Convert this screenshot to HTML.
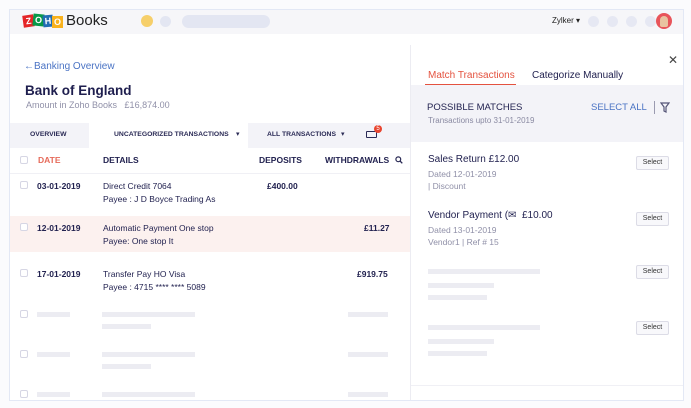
<!DOCTYPE html>
<html><head><meta charset="utf-8"><style>
*{margin:0;padding:0;box-sizing:border-box}
body{width:691px;height:408px;background:#fbfbfd;font-family:"Liberation Sans",sans-serif;position:relative;overflow:hidden;color:#222250}
.a{position:absolute;white-space:nowrap}
.sk{position:absolute;background:#ececf2;height:5px}
.cb{position:absolute;width:8px;height:8px;border:1px solid #d6d6e4;border-radius:2px;background:#fff}
.btn{position:absolute;width:33px;height:14px;border:1px solid #dcdce6;border-radius:2px;background:#f8f8fb;font-size:7px;text-align:center;line-height:12px;color:#333}
.dot{position:absolute;width:11px;height:11px;border-radius:50%;background:#e6e8f3}
</style></head><body>
<div class="a" style="left:9px;top:9px;width:675px;height:392px;background:#fff;border:1px solid #e3e8f5"></div>
<div class="a" style="left:10px;top:10px;width:673px;height:24px;background:#f6f6f9"></div>
<div class="a" style="left:23px;top:15px;width:11px;height:12px;background:#e42527;transform:rotate(-8deg);color:#fff;font-size:9px;font-weight:bold;text-align:center;line-height:12px">Z</div>
<div class="a" style="left:33px;top:14px;width:11px;height:12px;background:#089949;transform:rotate(6deg);color:#fff;font-size:9px;font-weight:bold;text-align:center;line-height:12px">O</div>
<div class="a" style="left:43px;top:15px;width:10px;height:12px;background:#226db4;transform:rotate(-5deg);color:#fff;font-size:9px;font-weight:bold;text-align:center;line-height:12px">H</div>
<div class="a" style="left:52px;top:16px;width:11px;height:12px;background:#f9b21d;color:#fff;font-size:9px;font-weight:bold;text-align:center;line-height:12px">O</div>
<div class="a" style="left:66px;top:12px;font-size:15px;color:#222;line-height:18px">Books</div>
<div class="a" style="left:141px;top:15px;width:12px;height:12px;border-radius:50%;background:#f6cf6a"></div>
<div class="a" style="left:160px;top:16px;width:11px;height:11px;border-radius:50%;background:#e3e6f2"></div>
<div class="a" style="left:182px;top:15px;width:88px;height:13px;border-radius:7px;background:#e3e6f2"></div>
<div class="a" style="left:552px;top:16px;font-size:8px;color:#222">Zylker ▾</div>
<div class="dot" style="left:588px;top:16px"></div><div class="dot" style="left:607px;top:16px"></div><div class="dot" style="left:626px;top:16px"></div><div class="dot" style="left:645px;top:16px"></div>
<div class="a" style="left:656px;top:13px;width:16px;height:16px;border-radius:50%;background:#e8545a"><div style="margin:3px 4px;width:8px;height:11px;border-radius:4px 4px 2px 2px;background:#e9c3a0"></div></div>
<div class="a" style="left:24px;top:61px;font-size:10px;color:#4a73c4">←Banking Overview</div>
<div class="a" style="left:25px;top:83px;font-size:13.5px;font-weight:bold;color:#1e1e4e">Bank of England</div>
<div class="a" style="left:26px;top:100px;font-size:9px;color:#9090a8">Amount in Zoho Books &nbsp; £16,874.00</div>
<div class="a" style="left:10px;top:123px;width:400px;height:25px;background:#f3f3f8"></div>
<div class="a" style="left:89px;top:123px;width:159px;height:25px;background:#fff"></div>
<div class="a" style="left:30px;top:131px;font-size:6.8px;font-weight:bold;color:#2a2a55">OVERVIEW</div>
<div class="a" style="left:114px;top:131px;font-size:6.8px;font-weight:bold;color:#2a2a55">UNCATEGORIZED TRANSACTIONS</div>
<div class="a" style="left:236px;top:130px;font-size:7px;color:#2a2a55">▾</div>
<div class="a" style="left:267px;top:131px;font-size:6.8px;font-weight:bold;color:#2a2a55">ALL TRANSACTIONS</div>
<div class="a" style="left:341px;top:130px;font-size:7px;color:#2a2a55">▾</div>
<div class="a" style="left:366px;top:131px;width:11px;height:7px;border:1.3px solid #2a2a55;border-radius:1px"></div>
<div class="a" style="left:374px;top:125px;width:8px;height:8px;border-radius:50%;background:#e8452f;color:#fff;font-size:6px;text-align:center;line-height:8px">5</div>
<div class="a" style="left:10px;top:173px;width:400px;height:1px;background:#f0f0f5"></div>
<div class="cb" style="left:20px;top:156px"></div>
<div class="a" style="left:38px;top:155px;font-size:8.5px;font-weight:bold;color:#e66a5a">DATE</div>
<div class="a" style="left:103px;top:155px;font-size:8.5px;font-weight:bold">DETAILS</div>
<div class="a" style="left:259px;top:155px;font-size:8.5px;font-weight:bold">DEPOSITS</div>
<div class="a" style="left:325px;top:155px;font-size:8.5px;font-weight:bold">WITHDRAWALS</div>
<svg class="a" style="left:395px;top:156px" width="8" height="8" viewBox="0 0 8 8"><circle cx="3.3" cy="3.3" r="2.4" fill="none" stroke="#2a2a55" stroke-width="1.2"/><path d="M5 5l2.3 2.3" stroke="#2a2a55" stroke-width="1.3"/></svg>
<div class="cb" style="left:20px;top:181px"></div>
<div class="a" style="left:37px;top:181px;font-size:8.5px;font-weight:bold">03-01-2019</div>
<div class="a" style="left:103px;top:181px;font-size:8.5px">Direct Credit 7064</div>
<div class="a" style="left:103px;top:194px;font-size:8.5px">Payee : J D Boyce Trading As</div>
<div class="a" style="left:267px;top:181px;font-size:8.5px;font-weight:bold">£400.00</div>
<div class="a" style="left:10px;top:216px;width:400px;height:36px;background:#fcf1ef"></div>
<div class="cb" style="left:20px;top:223px"></div>
<div class="a" style="left:37px;top:223px;font-size:8.5px;font-weight:bold">12-01-2019</div>
<div class="a" style="left:103px;top:223px;font-size:8.5px">Automatic Payment One stop</div>
<div class="a" style="left:103px;top:236px;font-size:8.5px">Payee: One stop It</div>
<div class="a" style="left:364px;top:223px;font-size:8.5px;font-weight:bold">£11.27</div>
<div class="cb" style="left:20px;top:269px"></div>
<div class="a" style="left:37px;top:269px;font-size:8.5px;font-weight:bold">17-01-2019</div>
<div class="a" style="left:103px;top:269px;font-size:8.5px">Transfer Pay HO Visa</div>
<div class="a" style="left:103px;top:282px;font-size:8.5px">Payee : 4715 **** **** 5089</div>
<div class="a" style="left:357px;top:269px;font-size:8.5px;font-weight:bold">£919.75</div>
<div class="cb" style="left:20px;top:310px"></div><div class="sk" style="left:37px;top:312px;width:33px"></div><div class="sk" style="left:102px;top:312px;width:93px"></div><div class="sk" style="left:102px;top:324px;width:49px"></div><div class="sk" style="left:348px;top:312px;width:40px"></div>
<div class="cb" style="left:20px;top:350px"></div><div class="sk" style="left:37px;top:352px;width:33px"></div><div class="sk" style="left:102px;top:352px;width:93px"></div><div class="sk" style="left:102px;top:364px;width:49px"></div><div class="sk" style="left:348px;top:352px;width:40px"></div>
<div class="cb" style="left:20px;top:390px"></div><div class="sk" style="left:37px;top:392px;width:33px"></div><div class="sk" style="left:102px;top:392px;width:93px"></div><div class="sk" style="left:348px;top:392px;width:40px"></div>
<div class="a" style="left:410px;top:45px;width:1px;height:355px;background:#ececf2"></div>
<div class="a" style="left:668px;top:53px;font-size:12px;color:#444">✕</div>
<div class="a" style="left:428px;top:70px;font-size:10px;color:#e4523f">Match Transactions</div>
<div class="a" style="left:425px;top:84px;width:91px;height:1.5px;background:#e4523f"></div>
<div class="a" style="left:532px;top:70px;font-size:10px;color:#222250">Categorize Manually</div>
<div class="a" style="left:411px;top:85px;width:272px;height:57px;background:#f3f3f8"></div>
<div class="a" style="left:427px;top:102px;font-size:9.5px;color:#222250">POSSIBLE MATCHES</div>
<div class="a" style="left:428px;top:116px;font-size:8px;color:#8a8aa2">Transactions upto 31-01-2019</div>
<div class="a" style="left:591px;top:102px;font-size:9.5px;color:#4a73c4">SELECT ALL</div>
<div class="a" style="left:654px;top:101px;width:1px;height:13px;background:#9a9ab0"></div>
<svg class="a" style="left:660px;top:102px" width="10" height="11" viewBox="0 0 10 11"><path d="M1 1h8L6 5v5L4 9V5z" fill="none" stroke="#555577" stroke-width="1.2"/></svg>
<div class="a" style="left:428px;top:154px;font-size:10px">Sales Return £12.00</div>
<div class="a" style="left:428px;top:169px;font-size:8.5px;color:#9090a8">Dated 12-01-2019</div>
<div class="a" style="left:428px;top:181px;font-size:8.5px;color:#9090a8">| Discount</div>
<div class="btn" style="left:636px;top:156px">Select</div>
<div class="a" style="left:428px;top:210px;font-size:10px">Vendor Payment (✉ &nbsp;£10.00</div>
<div class="a" style="left:428px;top:225px;font-size:8.5px;color:#9090a8">Dated 13-01-2019</div>
<div class="a" style="left:428px;top:237px;font-size:8.5px;color:#9090a8">Vendor1 | Ref # 15</div>
<div class="btn" style="left:636px;top:212px">Select</div>
<div class="sk" style="left:428px;top:269px;width:112px"></div><div class="sk" style="left:428px;top:283px;width:66px"></div><div class="sk" style="left:428px;top:295px;width:59px"></div>
<div class="btn" style="left:636px;top:265px">Select</div>
<div class="sk" style="left:428px;top:325px;width:112px"></div><div class="sk" style="left:428px;top:339px;width:66px"></div><div class="sk" style="left:428px;top:351px;width:59px"></div>
<div class="btn" style="left:636px;top:321px">Select</div>
<div class="a" style="left:411px;top:385px;width:272px;height:1px;background:#f0f0f5"></div>
</body></html>
